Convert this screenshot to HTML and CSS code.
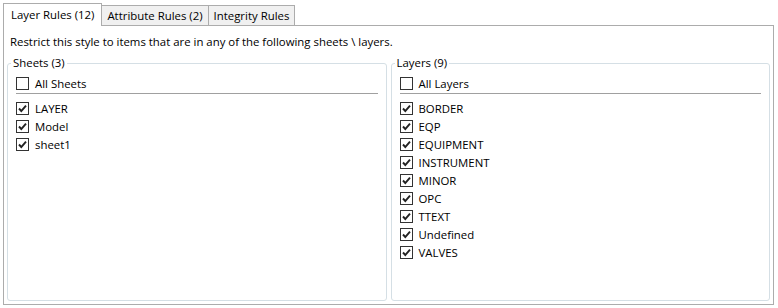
FILE: index.html
```html
<!DOCTYPE html>
<html lang="en">
<head>
    <meta charset="UTF-8">
    <title>Style Rules</title>
    <link rel="stylesheet" href="styles.css">
</head>
<body>
    <div class="tabs">
        <div class="tab active">Layer Rules (12)</div>
        <div class="tab">Attribute Rules (2)</div>
        <div class="tab">Integrity Rules</div>
    </div>
    <div class="panel">
        <p class="intro">Restrict this style to items that are in any of the following sheets \ layers.</p>
        <div class="groups">
            <fieldset class="group">
                <legend>Sheets (3)</legend>
                <label class="row all"><span class="box"></span>All Sheets</label>
                <div class="sep"></div>
                <div class="list">
                    <label class="row"><span class="box checked"></span>LAYER</label>
                    <label class="row"><span class="box checked"></span>Model</label>
                    <label class="row"><span class="box checked"></span>sheet1</label>
                </div>
            </fieldset>
            <fieldset class="group">
                <legend>Layers (9)</legend>
                <label class="row all"><span class="box"></span>All Layers</label>
                <div class="sep"></div>
                <div class="list">
                    <label class="row"><span class="box checked"></span>BORDER</label>
                    <label class="row"><span class="box checked"></span>EQP</label>
                    <label class="row"><span class="box checked"></span>EQUIPMENT</label>
                    <label class="row"><span class="box checked"></span>INSTRUMENT</label>
                    <label class="row"><span class="box checked"></span>MINOR</label>
                    <label class="row"><span class="box checked"></span>OPC</label>
                    <label class="row"><span class="box checked"></span>TTEXT</label>
                    <label class="row"><span class="box checked"></span>Undefined</label>
                    <label class="row"><span class="box checked"></span>VALVES</label>
                </div>
            </fieldset>
        </div>
    </div>
</body>
</html>
```

FILE: styles.css
```css
body {
    margin: 0;
    background: #fff;
    color: #000;
    font-family: "Open Sans", "Noto Sans", sans-serif;
    font-size: 11.4px;
    width: 778px;
    height: 308px;
    overflow: hidden;
}
.tabs {
    display: flex;
    align-items: flex-end;
    height: 25px;
    padding-left: 3px;
}
.tab {
    height: 20px;
    line-height: 19px;
    padding: 0 5px;
    background: #f0f0f0;
    border: 1px solid #acacac;
    border-bottom: none;
    box-sizing: border-box;
    margin-left: -1px;
    white-space: nowrap;
}
.tab.active {
    height: 23px;
    line-height: 21px;
    padding: 0 7px;
    margin-left: 0;
    margin-bottom: -1px;
    background: #fff;
    position: relative;
    z-index: 1;
}
.panel {
    margin: 0 4px 0 3px;
    height: 280px;
    border: 1px solid #acacac;
    box-sizing: border-box;
    padding: 8px 3px 3px 3px;
    display: flex;
    flex-direction: column;
}
.intro {
    margin: 0 0 5px 3px;
    height: 16px;
    line-height: 16px;
    white-space: nowrap;
}
.groups {
    flex: 1;
    display: flex;
    gap: 4px;
}
.group {
    flex: 1;
    margin: 0;
    padding: 0 8px;
    border: 1px solid #d5dfe5;
    border-radius: 3px;
    min-width: 0;
}
.group legend {
    padding: 0 2px;
    margin-left: -5px;
    line-height: 16px;
}
.row {
    display: flex;
    align-items: center;
    height: 18px;
    gap: 6px;
    white-space: nowrap;
}
.row.all {
    margin-top: 3px;
}
.box {
    width: 13px;
    height: 13px;
    box-sizing: border-box;
    border: 1px solid #333;
    background: #fff;
    flex: none;
}
.box.checked {
    background: #fff url("data:image/svg+xml,%3Csvg xmlns='http://www.w3.org/2000/svg' viewBox='0 0 11 11'%3E%3Cpath d='M2 5.5 L4.3 8 L9 2.6' fill='none' stroke='%23222' stroke-width='1.9'/%3E%3C/svg%3E") center / 11px 11px no-repeat;
}
.sep {
    height: 1px;
    margin-top: 1px;
    background: #a0a0a0;
}
.list {
    margin-top: 5px;
}
```
